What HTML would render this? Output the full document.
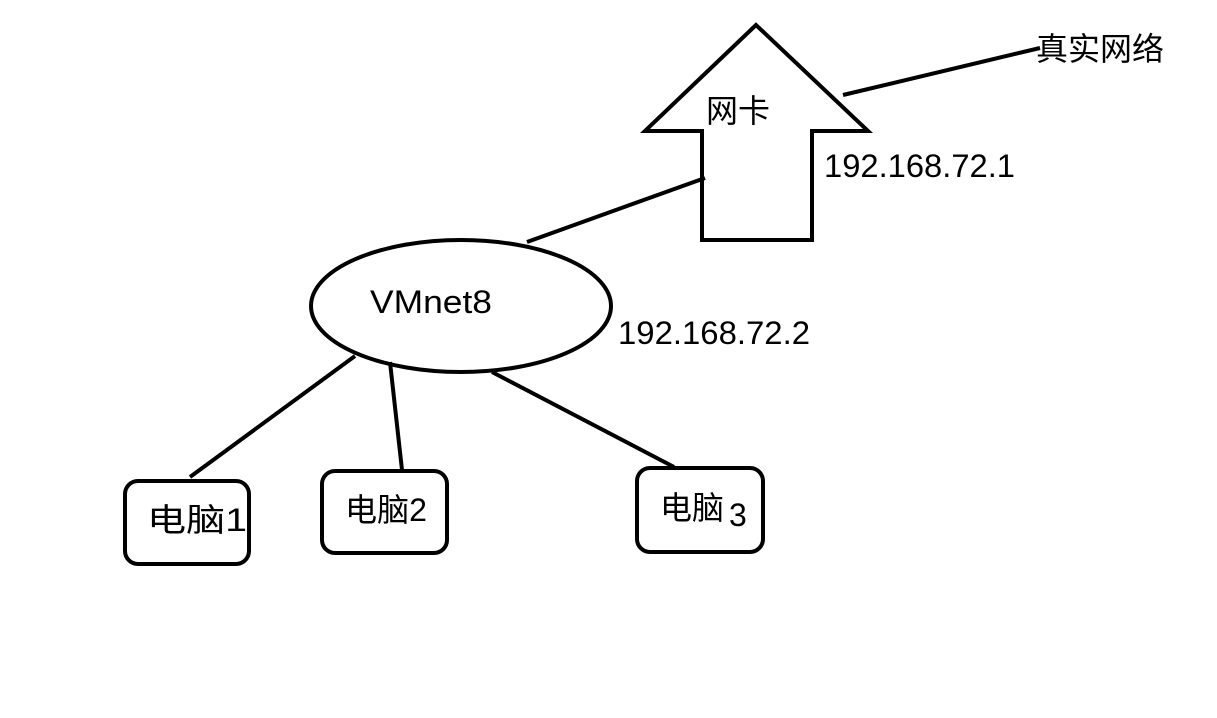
<!DOCTYPE html>
<html><head><meta charset="utf-8"><style>
html,body{margin:0;padding:0;background:#fff;width:1217px;height:718px;overflow:hidden}
text{font-family:"Liberation Sans","Noto Sans CJK SC",sans-serif;fill:#000;font-size:32px}
</style></head><body>
<svg width="1217" height="718" viewBox="0 0 1217 718" xmlns="http://www.w3.org/2000/svg">
<g fill="none" stroke="#000" stroke-width="4" stroke-linejoin="miter">
<polygon points="756,25 645,131 702,131 702,240 812,240 812,131 868,131"/>
<line x1="843" y1="95" x2="1040" y2="48"/>
<line x1="705" y1="178" x2="527" y2="242"/>
<ellipse cx="461" cy="306" rx="150" ry="66"/>
<line x1="355" y1="356" x2="190" y2="477"/>
<line x1="390" y1="362" x2="402" y2="470"/>
<line x1="492" y1="372" x2="674" y2="467"/>
<rect x="125" y="481" width="124" height="83" rx="13"/>
<rect x="322" y="471" width="125" height="82" rx="13"/>
<rect x="637" y="468" width="126" height="84" rx="13"/>
</g>
<text x="1036" y="60" textLength="128" lengthAdjust="spacingAndGlyphs">真实网络</text>
<text x="706" y="122" textLength="64" lengthAdjust="spacingAndGlyphs">网卡</text>
<text x="824" y="177" textLength="191" lengthAdjust="spacingAndGlyphs">192.168.72.1</text>
<text x="370" y="313" textLength="122" lengthAdjust="spacingAndGlyphs">VMnet8</text>
<text x="618" y="344" textLength="192" lengthAdjust="spacingAndGlyphs">192.168.72.2</text>
<text x="147" y="531" textLength="100" lengthAdjust="spacingAndGlyphs">电脑1</text>
<text x="345" y="521" textLength="82" lengthAdjust="spacingAndGlyphs">电脑2</text>
<text x="660" y="519" textLength="64" lengthAdjust="spacingAndGlyphs">电脑</text>
<text x="729" y="526">3</text>
</svg>
</body></html>
